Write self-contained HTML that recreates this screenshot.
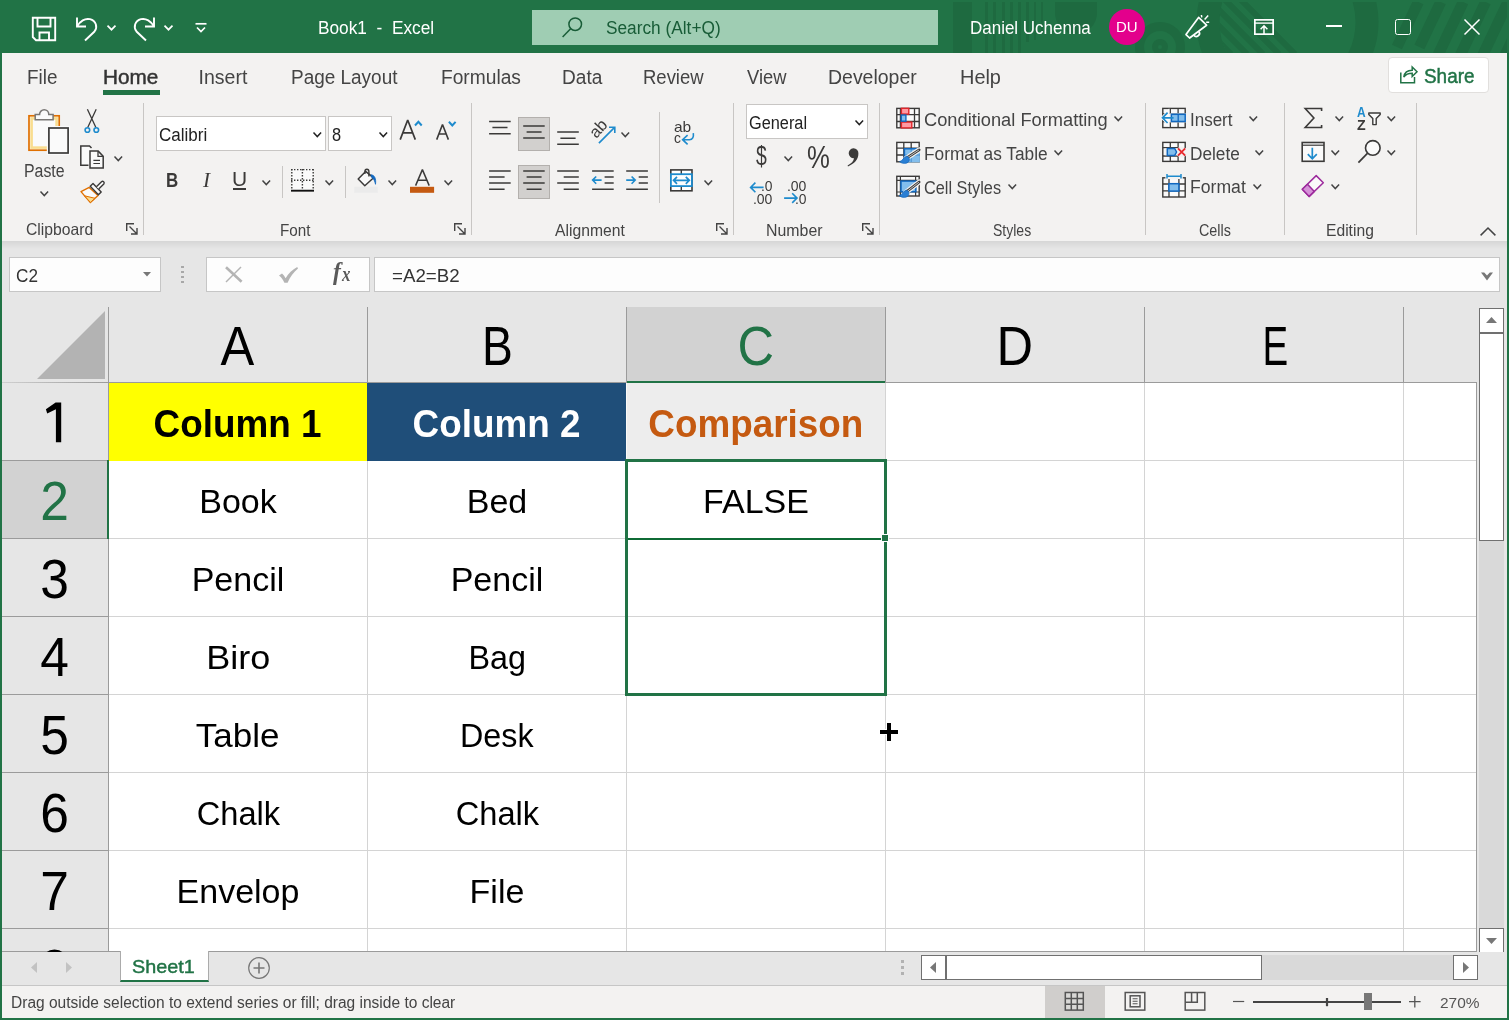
<!DOCTYPE html>
<html>
<head>
<meta charset="utf-8">
<title>Book1 - Excel</title>
<style>
*{box-sizing:border-box;margin:0;padding:0}
html,body{width:1509px;height:1020px;overflow:hidden;background:#f3f2f1;font-family:"Liberation Sans",sans-serif;color:#444}
#win{will-change:transform;position:absolute;left:0;top:0;width:1509px;height:1020px;overflow:hidden;background:#f3f2f1}
.abs{position:absolute}
.t{position:absolute;white-space:nowrap;line-height:1;transform-origin:0 0}
svg{position:absolute;overflow:visible}
/* title bar */
#title{position:absolute;left:0;top:0;width:1509px;height:53px;background:#217346;overflow:hidden}
#search{position:absolute;left:532px;top:10px;width:406px;height:35px;background:#9fcdb3}
/* tabs */
#tabs{position:absolute;left:2px;top:53px;width:1505px;height:47px;background:#f3f2f1}
/* ribbon */
#ribbon{position:absolute;left:2px;top:100px;width:1505px;height:141px;background:#f3f2f1}
.sep{position:absolute;width:1px;background:#c8c6c4;top:106px;height:131px}
.glabel{position:absolute;top:221px;font-size:16px;color:#444;white-space:nowrap;line-height:1}
/* formula bar */
#fbar{position:absolute;left:2px;top:241px;width:1505px;height:67px;background:#e6e6e6}
/* grid */
#grid{position:absolute;left:2px;top:308px;width:1474px;height:643px;background:#fff;overflow:hidden}

#gridwrap{position:absolute;left:0;top:0;width:1509px;height:952px;overflow:hidden}
.hl{position:absolute;height:1px;background:#d4d4d4;left:109px;width:1367px}
.vl{position:absolute;width:1px;background:#d4d4d4;top:383px;height:568px}
.ch{position:absolute;top:308px;height:74px;background:#e6e6e6}
.chl{position:absolute;top:307px;height:75px;width:1px;background:#9b9b9b}
.rh{position:absolute;left:2px;width:106px;height:77px;background:#e6e6e6}
.rhl{position:absolute;left:2px;width:106px;height:1px;background:#9b9b9b}
.cht{position:absolute;top:315.5px;font-size:55px;line-height:60px;color:#000;text-align:center;width:259px}
.rht{position:absolute;left:2px;width:106px;font-size:56px;line-height:60px;color:#000;text-align:center}
.cell{position:absolute;width:258px;height:77px;text-align:center;color:#000;font-size:34px;line-height:81px;white-space:nowrap}
.cell.hd{font-size:38px;line-height:82px}
.cell.hd span{transform:scaleX(.97)}
.cell span{display:inline-block}
.cht span,.rht span{display:inline-block;transform:scaleX(.92)}
.sbtn{background:#fff;border:1px solid #707070}
.tab{font-size:19.5px;line-height:23px;color:#444}
.gl{font-size:16.5px;line-height:20px;color:#444}
.rt{font-size:18px;line-height:21px;color:#444}
.box{background:#fff;border:1px solid #c8c6c4}
.ic{color:#3b3a39}
.fb{background:#fdfdfd;border:1px solid #c6c6c6}
</style>
</head>
<body>
<div id="win">
<div id="title">
  <!-- decorative pattern -->
  <svg style="left:0;top:0" width="1509" height="53" viewBox="0 0 1509 53">
    <defs><clipPath id="cpin"><circle cx="1287.5" cy="22" r="68"/></clipPath><clipPath id="cpbar"><rect x="0" y="2" width="1509" height="51"/></clipPath></defs>
    <g clip-path="url(#cpbar)">
    <g fill="#1e6a40" stroke="none">
      <rect x="953" y="2" width="19" height="51"/>
      <rect x="985" y="2" width="3" height="51"/><rect x="993" y="2" width="3" height="51"/><rect x="1002" y="2" width="3" height="51"/><rect x="1010" y="2" width="3" height="51"/><rect x="1018" y="2" width="3" height="51"/><rect x="1026" y="2" width="3" height="40"/><rect x="1034" y="2" width="2" height="38"/><rect x="1041" y="2" width="2" height="30"/>
      <path d="M1055 2H1097V13A21 21 0 0 1 1055 13Z"/>
    </g>
    <g fill="none" stroke="#1e6a40">
      <circle cx="1160" cy="47" r="20.5" stroke-width="9"/>
      <circle cx="1160" cy="47" r="5" stroke-width="6"/>
      <circle cx="1287.5" cy="22" r="79.5" stroke-width="23"/>
    </g>
    <g stroke="#1e6a40" stroke-width="6" fill="none" clip-path="url(#cpin)">
      <path d="M1177 0L1231 54M1193 0L1247 54M1209 0L1263 54M1225 0L1279 54M1241 0L1295 54"/>
    </g>
    <g stroke="#1e6a40" stroke-width="11" fill="none">
      <path d="M1418.4 2L1397 47M1440.8 2L1419.4 47M1463.2 2L1438 55M1485.6 2L1460.4 55M1508 2L1482.8 55M1530.4 2L1505.2 55"/>
    </g>
    </g>
  </svg>
  <div id="search"></div>
  <!-- save -->
  <svg style="left:32px;top:17px" width="24" height="24" viewBox="0 0 24 24" fill="none" stroke="#fff" stroke-width="1.9"><path d="M0.8 0.8H23.2V23.2H4L0.8 20Z"/><path d="M5.5 0.8V9.5H18.5V0.8"/><path d="M7.5 23V15.5H17V23"/></svg>
  <!-- undo -->
  <svg style="left:76px;top:17px" width="22" height="24" viewBox="0 0 22 24" fill="none" stroke="#fff" stroke-width="1.9"><path d="M1 0.5V9.5H10"/><path d="M1.3 9.2C4 4 9 1 14 2.2C20 3.8 22 10 18.5 14.5L9 23.5"/></svg>
  <svg style="left:107px;top:25px" width="9" height="6" viewBox="0 0 9 6" fill="none" stroke="#fff" stroke-width="1.7"><path d="M0.5 0.7L4.5 4.7L8.5 0.7"/></svg>
  <!-- redo -->
  <svg style="left:133px;top:17px" width="22" height="24" viewBox="0 0 22 24" fill="none" stroke="#fff" stroke-width="1.9"><path d="M21 0.5V9.5H12"/><path d="M20.7 9.2C18 4 13 1 8 2.2C2 3.8 0 10 3.5 14.5L13 23.5"/></svg>
  <svg style="left:164px;top:25px" width="9" height="6" viewBox="0 0 9 6" fill="none" stroke="#fff" stroke-width="1.7"><path d="M0.5 0.7L4.5 4.7L8.5 0.7"/></svg>
  <!-- customize -->
  <svg style="left:195px;top:23px" width="12" height="10" viewBox="0 0 12 10" fill="none" stroke="#fff" stroke-width="1.7"><path d="M0.5 0.8H11.5"/><path d="M2 4.5L6 8.5L10 4.5"/></svg>
  <div class="t" id="ttl" style="left:317.9px;top:17.6px;font-size:18px;color:#fff;line-height:21px;white-space:pre;transform:scaleX(0.959)">Book1  -  Excel</div>
  <!-- search icon -->
  <svg style="left:562px;top:17px" width="21" height="21" viewBox="0 0 21 21" fill="none" stroke="#185c37" stroke-width="1.5"><circle cx="13.2" cy="7.2" r="6.3"/><path d="M8.6 11.8L0.6 20"/></svg>
  <div class="t" id="srch" style="left:606.4px;top:17.6px;font-size:18px;color:#185c37;line-height:21px;transform:scaleX(0.959)">Search (Alt+Q)</div>
  <div class="t" id="usr" style="left:970.4px;top:17.6px;font-size:18px;color:#fff;line-height:21px;transform:scaleX(0.943)">Daniel Uchenna</div>
  <div class="abs" style="left:1109px;top:9px;width:36px;height:36px;border-radius:18px;background:#e3008c"></div>
  <div class="t" id="du" style="left:1116px;top:18px;font-size:15px;color:#fff;line-height:18px">DU</div>
  <!-- megaphone -->
  <svg style="left:1185px;top:14px" width="25" height="25" viewBox="0 0 25 25" fill="none" stroke="#fff" stroke-width="1.7"><path d="M13.6 3.4L1 20.6L4.6 24L21.6 11.2Z" stroke-linejoin="round"/><path d="M8.8 21.2A3 3 0 0 0 13.8 17.4"/><path d="M16.8 3.4L16.4 1M19.6 5.4L23.2 1.6M21.2 8.2H24.2" stroke-width="1.5"/></svg>
  <!-- ribbon display -->
  <svg style="left:1254px;top:19px" width="20" height="16" viewBox="0 0 20 16" fill="none" stroke="#fff" stroke-width="1.7"><rect x="0.85" y="0.85" width="18.3" height="14.3"/><path d="M0.8 4.1H19.2" stroke-width="1.4"/><path d="M10 15V7.4M6.6 10.2L10 6.8L13.4 10.2" stroke-width="1.5"/></svg>
  <!-- minimize -->
  <div class="abs" style="left:1326px;top:25px;width:16px;height:2px;background:#fff"></div>
  <!-- maximize -->
  <div class="abs" style="left:1395px;top:19px;width:16px;height:16px;border:1.5px solid #fff;border-radius:2.5px"></div>
  <!-- close -->
  <svg style="left:1464px;top:19px" width="16" height="16" viewBox="0 0 16 16" fill="none" stroke="#fff" stroke-width="1.5"><path d="M0.5 0.5L15.5 15.5M15.5 0.5L0.5 15.5"/></svg>
</div>
<div id="tabs"></div>
<div class="t tab" id="tab0" style="left:26.6px;top:66px;transform:scaleX(0.967)">File</div>
<div class="t tab" id="tab1" style="left:198.6px;top:66px;transform:scaleX(1.000)">Insert</div>
<div class="t tab" id="tab2" style="left:290.8px;top:66px;transform:scaleX(0.972)">Page Layout</div>
<div class="t tab" id="tab3" style="left:441.2px;top:66px;transform:scaleX(0.983)">Formulas</div>
<div class="t tab" id="tab4" style="left:562.2px;top:66px;transform:scaleX(0.978)">Data</div>
<div class="t tab" id="tab5" style="left:642.5px;top:66px;transform:scaleX(0.948)">Review</div>
<div class="t tab" id="tab6" style="left:746.6px;top:66px;transform:scaleX(0.940)">View</div>
<div class="t tab" id="tab7" style="left:828.2px;top:66px;transform:scaleX(0.998)">Developer</div>
<div class="t tab" id="tab8" style="left:960.0px;top:66px;transform:scaleX(1.021)">Help</div>
<div class="t tab" id="tabh" style="left:103.2px;top:66px;font-weight:normal;-webkit-text-stroke:0.45px currentColor;color:#333;transform:scaleX(1.062)">Home</div>
<div class="abs" style="left:103px;top:90px;width:57px;height:5px;background:#217346"></div>
<div class="abs" style="left:1388px;top:57px;width:101px;height:36px;background:#fff;border:1px solid #e1dfdd;border-radius:4px"></div>
<svg style="left:1400px;top:66px" width="18" height="18" viewBox="0 0 18 18" fill="none" stroke="#217346" stroke-width="1.5"><path d="M0.8 6.5V16.8H14.5V11"/><path d="M3.8 11C4.5 6.5 8 4.3 12.2 4.3V1L17 5.8L12.2 10.5V7.3C8.5 7.3 5.8 8.3 3.8 11Z"/></svg>
<div class="t" id="share" style="left:1424.0px;top:65px;font-size:19.5px;line-height:23px;font-weight:normal;-webkit-text-stroke:0.45px currentColor;color:#217346;transform:scaleX(0.970)">Share</div>
<div id="ribbon"></div>
<div id="fbar"></div>
<!-- FORMULA BAR -->
<div class="abs fb" style="left:9px;top:257px;width:152px;height:35px"></div>
<div class="abs fb" style="left:206px;top:257px;width:164px;height:35px"></div>
<div class="abs fb" style="left:374px;top:257px;width:1126px;height:35px"></div>
<div class="t" id="namebox" style="left:16.4px;top:265.8px;font-size:18px;line-height:21px;color:#333;transform:scaleX(0.952)">C2</div>
<div class="t" id="formula" style="left:391.8px;top:265.8px;font-size:18px;line-height:21px;color:#333;transform:scaleX(1.040)">=A2=B2</div>
<svg style="left:142.8px;top:272px" width="8" height="5" viewBox="0 0 8 5"><path d="M0 0H8L4 4.6Z" fill="#777"/></svg>
<div class="abs" style="left:181px;top:265.5px;width:3px;height:2.6px;background:#a8a8a8"></div>
<div class="abs" style="left:181px;top:270.5px;width:3px;height:2.6px;background:#a8a8a8"></div>
<div class="abs" style="left:181px;top:275.5px;width:3px;height:2.6px;background:#a8a8a8"></div>
<div class="abs" style="left:181px;top:280.5px;width:3px;height:2.6px;background:#a8a8a8"></div>
<svg style="left:224px;top:265px" width="20" height="19" viewBox="0 0 20 19" fill="none" stroke="#b4b4b4"><path d="M2 2.2L17.6 16.8" stroke-width="2.6"/><path d="M17 2L2 17" stroke-width="1.5"/></svg>
<svg style="left:278px;top:265px" width="21" height="19" viewBox="0 0 21 19" fill="#b4b4b4"><path d="M1 10.6L4 8.6C5.4 9.8 6.6 11.4 7.6 13.2C10.4 8.6 14.4 4.6 19.2 2L20 3.4C15.6 7 12.2 11.8 9.6 17.8H6.4C5.2 15 3.4 12.4 1 10.6Z"/></svg>
<div class="t" id="fxf" style="left:333.1px;top:258.1px;font-size:25px;line-height:28px;font-style:italic;font-weight:bold;font-family:'Liberation Serif',serif;color:#5a5a5a;transform:scaleX(0.942)">f</div><div class="t" id="fxx" style="left:342.3px;top:263.0px;font-size:20px;line-height:22px;font-style:italic;font-weight:bold;font-family:'Liberation Serif',serif;color:#5a5a5a;transform:scaleX(0.845)">x</div>
<svg style="left:1480.6px;top:271.6px" width="12" height="9" viewBox="0 0 12 9"><path d="M0 0.4H3.2L6 3.6L8.8 0.4H12L6 8.4Z" fill="#777"/></svg>
<!-- RIBBON -->
<div class="abs" style="left:143px;top:103px;width:1px;height:132px;background:#c8c6c4"></div>
<div class="abs" style="left:471px;top:103px;width:1px;height:132px;background:#c8c6c4"></div>
<div class="abs" style="left:733px;top:103px;width:1px;height:132px;background:#c8c6c4"></div>
<div class="abs" style="left:879px;top:103px;width:1px;height:132px;background:#c8c6c4"></div>
<div class="abs" style="left:1145px;top:103px;width:1px;height:132px;background:#c8c6c4"></div>
<div class="abs" style="left:1284px;top:103px;width:1px;height:132px;background:#c8c6c4"></div>
<div class="abs" style="left:1416px;top:103px;width:1px;height:132px;background:#c8c6c4"></div>
<div class="abs" style="left:282px;top:166px;width:1px;height:32px;background:#c8c6c4"></div>
<div class="abs" style="left:345px;top:166px;width:1px;height:32px;background:#c8c6c4"></div>
<div class="abs" style="left:659px;top:112px;width:1px;height:91px;background:#c8c6c4"></div>
<div class="t gl" id="gl0" style="left:26.4px;top:219.4px;transform:scaleX(0.951)">Clipboard</div>
<div class="t gl" id="gl1" style="left:280.4px;top:219.7px;transform:scaleX(0.924)">Font</div>
<div class="t gl" id="gl2" style="left:555.2px;top:219.9px;transform:scaleX(0.951)">Alignment</div>
<div class="t gl" id="gl3" style="left:765.6px;top:219.6px;transform:scaleX(0.963)">Number</div>
<div class="t gl" id="gl4" style="left:992.8px;top:219.9px;transform:scaleX(0.849)">Styles</div>
<div class="t gl" id="gl5" style="left:1198.6px;top:219.6px;transform:scaleX(0.870)">Cells</div>
<div class="t gl" id="gl6" style="left:1326.4px;top:219.9px;transform:scaleX(0.948)">Editing</div>
<svg style="left:126.2px;top:223.3px" width="12" height="12" viewBox="0 0 12 12" fill="none" stroke="#444" stroke-width="1.4"><path d="M0.7 8V0.7H8"/><path d="M3.5 3.5L11 11M11 5V11H5"/></svg>
<svg style="left:454.1px;top:223.3px" width="12" height="12" viewBox="0 0 12 12" fill="none" stroke="#444" stroke-width="1.4"><path d="M0.7 8V0.7H8"/><path d="M3.5 3.5L11 11M11 5V11H5"/></svg>
<svg style="left:716.0px;top:223.3px" width="12" height="12" viewBox="0 0 12 12" fill="none" stroke="#444" stroke-width="1.4"><path d="M0.7 8V0.7H8"/><path d="M3.5 3.5L11 11M11 5V11H5"/></svg>
<svg style="left:862.0px;top:223.3px" width="12" height="12" viewBox="0 0 12 12" fill="none" stroke="#444" stroke-width="1.4"><path d="M0.7 8V0.7H8"/><path d="M3.5 3.5L11 11M11 5V11H5"/></svg>
<div class="t rt" id="paste" style="left:24.1px;top:161.3px;transform:scaleX(0.882)">Paste</div>
<svg style="left:40.0px;top:190.6px" width="8.6" height="5.4" viewBox="0 0 8.6 5.4" fill="none" stroke="#444" stroke-width="1.5"><path d="M0.5 0.6L4.3 4.6000000000000005L8.1 0.6"/></svg>
<svg style="left:114.0px;top:155.6px" width="8.6" height="5.4" viewBox="0 0 8.6 5.4" fill="none" stroke="#444" stroke-width="1.5"><path d="M0.5 0.6L4.3 4.6000000000000005L8.1 0.6"/></svg>
<div class="abs box" style="left:156px;top:116px;width:170px;height:35px"></div>
<div class="abs box" style="left:328px;top:116px;width:64px;height:35px"></div>
<div class="t rt" id="calibri" style="left:159.3px;top:124.7px;color:#222;transform:scaleX(0.945)">Calibri</div>
<div class="t rt" id="fsize" style="left:331.5px;top:125.1px;color:#222;transform:scaleX(0.910)">8</div>
<svg style="left:313.0px;top:131.9px" width="8.6" height="5.4" viewBox="0 0 8.6 5.4" fill="none" stroke="#222" stroke-width="1.5"><path d="M0.5 0.6L4.3 4.6000000000000005L8.1 0.6"/></svg>
<svg style="left:379.0px;top:131.9px" width="8.6" height="5.4" viewBox="0 0 8.6 5.4" fill="none" stroke="#222" stroke-width="1.5"><path d="M0.5 0.6L4.3 4.6000000000000005L8.1 0.6"/></svg>
<div class="t" id="bB" style="left:166.0px;top:167.5px;font-size:21px;line-height:24px;font-weight:bold;color:#3b3a39;transform:scaleX(0.807)">B</div>
<div class="t" id="bI" style="left:202.6px;top:167.5px;font-size:21px;line-height:24px;font-style:italic;font-family:'Liberation Serif',serif;color:#3b3a39;transform:scaleX(1.011)">I</div>
<div class="t" id="bU" style="left:231.7px;top:167.2px;font-size:19.5px;line-height:24px;color:#3b3a39;transform:scaleX(1.075)">U</div>
<div class="abs" style="left:232.5px;top:188.4px;width:13.5px;height:1.6px;background:#3b3a39"></div>
<svg style="left:261.9px;top:179.7px" width="8.6" height="5.4" viewBox="0 0 8.6 5.4" fill="none" stroke="#444" stroke-width="1.5"><path d="M0.5 0.6L4.3 4.6000000000000005L8.1 0.6"/></svg>
<svg style="left:324.7px;top:179.7px" width="8.6" height="5.4" viewBox="0 0 8.6 5.4" fill="none" stroke="#444" stroke-width="1.5"><path d="M0.5 0.6L4.3 4.6000000000000005L8.1 0.6"/></svg>
<svg style="left:388.1px;top:179.7px" width="8.6" height="5.4" viewBox="0 0 8.6 5.4" fill="none" stroke="#444" stroke-width="1.5"><path d="M0.5 0.6L4.3 4.6000000000000005L8.1 0.6"/></svg>
<svg style="left:444.0px;top:179.7px" width="8.6" height="5.4" viewBox="0 0 8.6 5.4" fill="none" stroke="#444" stroke-width="1.5"><path d="M0.5 0.6L4.3 4.6000000000000005L8.1 0.6"/></svg>
<div class="abs box" style="left:746px;top:104px;width:122px;height:35px"></div>
<div class="t rt" id="general" style="left:749.4px;top:112.7px;color:#222;transform:scaleX(0.906)">General</div>
<svg style="left:854.8px;top:119.5px" width="8.6" height="5.4" viewBox="0 0 8.6 5.4" fill="none" stroke="#222" stroke-width="1.5"><path d="M0.5 0.6L4.3 4.6000000000000005L8.1 0.6"/></svg>
<svg style="left:783.8px;top:155.7px" width="8.6" height="5.4" viewBox="0 0 8.6 5.4" fill="none" stroke="#444" stroke-width="1.5"><path d="M0.5 0.6L4.3 4.6000000000000005L8.1 0.6"/></svg>
<div class="abs" style="left:518px;top:117px;width:32px;height:34px;background:#d2d0ce;border:1px solid #b3b0ad"></div>
<div class="abs" style="left:518px;top:165px;width:32px;height:34px;background:#d2d0ce;border:1px solid #b3b0ad"></div>
<svg style="left:621.0px;top:132.0px" width="8.6" height="5.4" viewBox="0 0 8.6 5.4" fill="none" stroke="#444" stroke-width="1.5"><path d="M0.5 0.6L4.3 4.6000000000000005L8.1 0.6"/></svg>
<svg style="left:704.1px;top:179.9px" width="8.6" height="5.4" viewBox="0 0 8.6 5.4" fill="none" stroke="#444" stroke-width="1.5"><path d="M0.5 0.6L4.3 4.6000000000000005L8.1 0.6"/></svg>
<div class="t rt" id="st0" style="left:924.0px;top:110.1px;transform:scaleX(1.014)">Conditional Formatting</div>
<svg style="left:1114.3px;top:116.1px" width="8.6" height="5.4" viewBox="0 0 8.6 5.4" fill="none" stroke="#444" stroke-width="1.5"><path d="M0.5 0.6L4.3 4.6000000000000005L8.1 0.6"/></svg>
<div class="t rt" id="st1" style="left:924.2px;top:143.7px;transform:scaleX(0.960)">Format as Table</div>
<svg style="left:1054.0px;top:149.8px" width="8.6" height="5.4" viewBox="0 0 8.6 5.4" fill="none" stroke="#444" stroke-width="1.5"><path d="M0.5 0.6L4.3 4.6000000000000005L8.1 0.6"/></svg>
<div class="t rt" id="st2" style="left:924.0px;top:177.5px;transform:scaleX(0.906)">Cell Styles</div>
<svg style="left:1008.4px;top:183.7px" width="8.6" height="5.4" viewBox="0 0 8.6 5.4" fill="none" stroke="#444" stroke-width="1.5"><path d="M0.5 0.6L4.3 4.6000000000000005L8.1 0.6"/></svg>
<div class="t rt" id="ce0" style="left:1190.1px;top:109.8px;transform:scaleX(0.944)">Insert</div>
<svg style="left:1248.6px;top:116.2px" width="8.6" height="5.4" viewBox="0 0 8.6 5.4" fill="none" stroke="#444" stroke-width="1.5"><path d="M0.5 0.6L4.3 4.6000000000000005L8.1 0.6"/></svg>
<div class="t rt" id="ce1" style="left:1190.0px;top:143.6px;transform:scaleX(0.957)">Delete</div>
<svg style="left:1254.8px;top:150.2px" width="8.6" height="5.4" viewBox="0 0 8.6 5.4" fill="none" stroke="#444" stroke-width="1.5"><path d="M0.5 0.6L4.3 4.6000000000000005L8.1 0.6"/></svg>
<div class="t rt" id="ce2" style="left:1190.0px;top:177.3px;transform:scaleX(0.979)">Format</div>
<svg style="left:1253.1px;top:183.8px" width="8.6" height="5.4" viewBox="0 0 8.6 5.4" fill="none" stroke="#444" stroke-width="1.5"><path d="M0.5 0.6L4.3 4.6000000000000005L8.1 0.6"/></svg>
<svg style="left:1334.7px;top:116.2px" width="8.6" height="5.4" viewBox="0 0 8.6 5.4" fill="none" stroke="#444" stroke-width="1.5"><path d="M0.5 0.6L4.3 4.6000000000000005L8.1 0.6"/></svg>
<svg style="left:1386.9px;top:116.2px" width="8.6" height="5.4" viewBox="0 0 8.6 5.4" fill="none" stroke="#444" stroke-width="1.5"><path d="M0.5 0.6L4.3 4.6000000000000005L8.1 0.6"/></svg>
<svg style="left:1330.9px;top:150.2px" width="8.6" height="5.4" viewBox="0 0 8.6 5.4" fill="none" stroke="#444" stroke-width="1.5"><path d="M0.5 0.6L4.3 4.6000000000000005L8.1 0.6"/></svg>
<svg style="left:1386.9px;top:150.2px" width="8.6" height="5.4" viewBox="0 0 8.6 5.4" fill="none" stroke="#444" stroke-width="1.5"><path d="M0.5 0.6L4.3 4.6000000000000005L8.1 0.6"/></svg>
<svg style="left:1330.9px;top:184.2px" width="8.6" height="5.4" viewBox="0 0 8.6 5.4" fill="none" stroke="#444" stroke-width="1.5"><path d="M0.5 0.6L4.3 4.6000000000000005L8.1 0.6"/></svg>
<svg style="left:1479.5px;top:227px" width="16" height="9" viewBox="0 0 16 9" fill="none" stroke="#444" stroke-width="1.5"><path d="M0.6 8.4L8 1L15.4 8.4"/></svg>
<div class="abs" style="left:2px;top:241px;width:1505px;height:8px;background:linear-gradient(#d6d6d6,#e6e6e6)"></div>
<svg id="ricons" style="left:0;top:100px" width="1509" height="141" viewBox="0 100 1509 141" fill="none">
<!-- paste -->
<rect x="29" y="115.8" width="30.2" height="34.4" fill="#fafafa" stroke="#e07000" stroke-width="1.7"/>
<rect x="31.6" y="118.4" width="25" height="29.2" stroke="#f9dd8f" stroke-width="2.6"/>
<path d="M35.2 119.8V114.4H39.6A4.6 4.6 0 0 1 48.8 114.4H53.1V119.8Z" fill="#fafafa" stroke="#797775" stroke-width="1.5"/>
<rect x="46.8" y="126" width="23.4" height="29" fill="#fafafa"/>
<rect x="48.9" y="128" width="19.2" height="25" fill="#fafafa" stroke="#3b3a39" stroke-width="1.7"/>
<!-- scissors -->
<path d="M87.4 109.2L95.9 127.6M96.2 109.2L87.7 127.6" stroke="#3b3a39" stroke-width="1.3"/>
<circle cx="87.4" cy="130" r="2.3" stroke="#1e8bcd" stroke-width="1.6"/><circle cx="96.3" cy="130" r="2.3" stroke="#1e8bcd" stroke-width="1.6"/>
<!-- copy -->
<path d="M88.5 165.2H80.8V146H89.5L91.5 148" stroke="#3b3a39" stroke-width="1.5" fill="#fafafa"/>
<path d="M90 151.1H98.2L103.2 156.2V167.9H90Z" fill="#fafafa" stroke="#3b3a39" stroke-width="1.5"/>
<path d="M98 151.3V156.4H103" stroke="#3b3a39" stroke-width="1.3"/>
<path d="M93.4 160.4H100M93.4 163.5H100" stroke="#3b3a39" stroke-width="1.2"/>
<!-- format painter -->
<path d="M89.2 187.4L81 191.6L90.4 202.6L98 195.6Z" fill="#fafafa" stroke="#e07000" stroke-width="1.4" stroke-linejoin="round"/>
<path d="M84.5 195.8L90.4 202.4L95 198.3Z" fill="#f9dd8f" stroke="#e07000" stroke-width="1"/>
<path d="M90.2 186.2L93 183.6L101.2 192L98.4 194.8Z" fill="#fafafa" stroke="#3b3a39" stroke-width="1.4" stroke-linejoin="round"/>
<path d="M96.4 186.8L101.5 181.8A1.6 1.6 0 0 1 103.8 184L98.7 189.1" fill="#fafafa" stroke="#3b3a39" stroke-width="1.4"/>
<!-- A^ Av -->
<path d="M400.2 139.6L407.7 120L415.3 139.6M403.1 132.8H412.4" stroke="#3b3a39" stroke-width="1.7" stroke-linejoin="bevel"/>
<path d="M415 125.5L418.4 121.8L421.7 125.5" stroke="#1e8bcd" stroke-width="2"/>
<path d="M436.7 139.6L442.5 124.5L448.4 139.6M439 134H446.2" stroke="#3b3a39" stroke-width="1.6" stroke-linejoin="bevel"/>
<path d="M448.9 121.8L452.3 125.5L455.6 121.8" stroke="#1e8bcd" stroke-width="2"/>
<!-- borders -->
<rect x="291.5" y="169" width="22" height="21" fill="#fafafa"/>
<path d="M291 169.6H314M291 180.3H314" stroke="#3b3a39" stroke-width="1.4" stroke-dasharray="1.4 1.6"/>
<path d="M291.8 169H291.8V190M302.4 169V190M313.2 169V190" stroke="#3b3a39" stroke-width="1.4" stroke-dasharray="1.4 1.6"/>
<path d="M291 190.7H314" stroke="#111" stroke-width="1.9"/>
<!-- bucket -->
<rect x="354.2" y="186.8" width="23.6" height="6" fill="#ebebeb"/>
<path d="M365.6 171.4L358.2 179L364.8 185.8L373.6 177.8Z" fill="#fafafa" stroke="#3b3a39" stroke-width="1.5" stroke-linejoin="round"/>
<path d="M364.9 174V171.6A2 2.4 0 0 1 368.9 171.6V176.6" stroke="#3b3a39" stroke-width="1.4"/>
<path d="M371 174.8C374.5 175 376.3 178.5 375.5 184.3C374.8 181 373.8 178.6 371.5 177.2Z" fill="#1168c0" stroke="#1168c0" stroke-width="0.8"/>
<!-- font color -->
<path d="M415.6 185.6L422.4 169.6L429.2 185.6M418 180.2H426.8" stroke="#3b3a39" stroke-width="1.5" stroke-linejoin="bevel"/>
<rect x="410" y="186.8" width="24.1" height="6" fill="#c55a11"/>
<path d="M489.1 121.5H510.7M492.4 127.6H507.5M489.1 133.7H510.7" stroke="#3b3a39" stroke-width="1.5"/>
<path d="M523.2 125.9H544.7M526.6 132H541.6M523.2 138.1H544.7" stroke="#3b3a39" stroke-width="1.5"/>
<path d="M557.2 132.1H578.8M560.4 138.2H575.6M557.2 144.3H578.8" stroke="#3b3a39" stroke-width="1.5"/>
<path d="M489.1 171.1H510.7M489.1 177.1H504.6M489.1 183.1H510.7M489.1 189.2H504.6" stroke="#3b3a39" stroke-width="1.5"/>
<path d="M523.2 171.1H544.7M526.6 177.1H541.6M523.2 183.1H544.7M526.6 189.2H541.6" stroke="#3b3a39" stroke-width="1.5"/>
<path d="M557.2 171.1H578.8M563.7 177.1H578.8M557.2 183.1H578.8M563.7 189.2H578.8" stroke="#3b3a39" stroke-width="1.5"/>
<path d="M592.1 171.1H613.7M604.6 177.1H613.7M604.6 183.1H613.7M592.1 189.2H613.7" stroke="#3b3a39" stroke-width="1.5"/>
<path d="M626.2 171.1H647.9M638.7 177.1H647.9M638.7 183.1H647.9M626.2 189.2H647.9" stroke="#3b3a39" stroke-width="1.5"/>
<path d="M592.6 180.1H601.6M596.2 176.5L592.6 180.1L596.2 183.7" stroke="#1e8bcd" stroke-width="1.6"/>
<path d="M626.2 180.1H635.2M631.6 176.5L635.2 180.1L631.6 183.7" stroke="#1e8bcd" stroke-width="1.6"/>
<path d="M598.9 143.1L614.6 127.4M609 127.2H614.8V133" stroke="#1e8bcd" stroke-width="1.6"/>
<path d="M682.6 139.7H689.5C692.5 139.7 693.9 137 693.3 133.2M687.6 135.2L682.6 139.7L687.6 144.3" stroke="#1e8bcd" stroke-width="1.6"/>
<rect x="670.8" y="169.9" width="21.2" height="20.9" fill="#fff" stroke="#3b3a39" stroke-width="1.6"/>
<path d="M681.3 170V191" stroke="#3b3a39" stroke-width="1.4"/>
<rect x="670.9" y="174.2" width="21" height="11.9" fill="#fdfdfd" stroke="#1e8bcd" stroke-width="1.8"/>
<path d="M673.6 180.3H689.2M677 176.8L673.5 180.3L677 183.8M685.8 176.8L689.3 180.3L685.8 183.8" stroke="#1e8bcd" stroke-width="1.7"/>
<path d="M853.3 148.3A4.9 4.9 0 0 1 858.4 153.6C858.4 159.6 854.4 163.9 848 166.4L847.6 165.4C851.6 163.4 853.6 161 854 158.2A4.9 4.9 0 0 1 853.3 148.3Z" fill="#3b3a39"/>
<path d="M750.6 187.4H763.6M755.4 182.6L750.6 187.4L755.4 192.2" stroke="#1e8bcd" stroke-width="1.6"/>
<path d="M784.1 198.1H797M792.2 193.3L797 198.1L792.2 202.9" stroke="#1e8bcd" stroke-width="1.6"/>
<!-- styles/cells/editing -->
<rect x="896.8" y="108.4" width="22.4" height="19.4" fill="#fafafa" stroke="#3b3a39" stroke-width="1.4"/>
<path d="M900.4 108.4V127.8M914.5 108.4V127.8M896.8 114.7H919.2M896.8 121.5H919.2" stroke="#3b3a39" stroke-width="1.3"/>
<rect x="901.4" y="108.3" width="7.4" height="5.8" fill="#ff9aa2" stroke="#e0262b" stroke-width="1.4"/>
<rect x="901.4" y="122.1" width="10.4" height="5.8" fill="#ff9aa2" stroke="#e0262b" stroke-width="1.4"/>
<rect x="901.3" y="115" width="4.6" height="6.2" fill="#83beec" stroke="#1168c0" stroke-width="1.4"/>
<rect x="896.8" y="142.4" width="22.4" height="19.4" fill="#fafafa" stroke="#3b3a39" stroke-width="1.4"/>
<path d="M903.8 142.4V161.8M911.2 142.4V161.8M896.8 148.2H919.2M896.8 155H919.2" stroke="#3b3a39" stroke-width="1.3"/>
<rect x="904.4" y="148.8" width="15.5" height="13.6" fill="#83beec"/>
<path d="M904.4 162.4V148.8H919.9" stroke="#1168c0" stroke-width="1.5"/>
<path d="M911.2 149V162M904 155H920" stroke="#1168c0" stroke-width="1" opacity=".55"/>
<path d="M906.1 158.4L919.2 149.8" stroke="#f3f2f1" stroke-width="5" stroke-linecap="round"/><path d="M906.1 158.4L919.2 149.8" stroke="#3b3a39" stroke-width="2.6" stroke-linecap="round"/><path d="M906.6 158.2L918.6 150.2" stroke="#d8d6d4" stroke-width="0.9" stroke-linecap="round"/><path d="M899.6 161.6C902.6 161.3 903.2 157.0 906.8 156.2C909.8 157.2 910.0 160.2 908.2 162.2C905.2 164.2 901.6 163.4 899.6 161.6Z" fill="#2a7fd4" stroke="#1168c0" stroke-width="0.8"/>
<rect x="896.8" y="176.3" width="22.4" height="19.7" fill="#fafafa" stroke="#3b3a39" stroke-width="1.4"/>
<path d="M900.4 176.3V196M915.6 176.3V196M896.8 180.3H919.2M896.8 192H919.2" stroke="#3b3a39" stroke-width="1.2"/>
<rect x="901" y="181.1" width="14.8" height="10.6" fill="#83beec" stroke="#1168c0" stroke-width="1.5"/>
<path d="M905.7 192.4L919.2 182" stroke="#f3f2f1" stroke-width="5" stroke-linecap="round"/><path d="M905.7 192.4L919.2 182" stroke="#3b3a39" stroke-width="2.6" stroke-linecap="round"/><path d="M906.2 192.2L918.6 182.4" stroke="#d8d6d4" stroke-width="0.9" stroke-linecap="round"/><path d="M899.2 195.6C902.2 195.3 902.8 191.0 906.4 190.2C909.4 191.2 909.6 194.2 907.8 196.2C904.8 198.2 901.2 197.4 899.2 195.6Z" fill="#2a7fd4" stroke="#1168c0" stroke-width="0.8"/>
<rect x="1162.8" y="108.4" width="22.4" height="19.2" fill="#fafafa" stroke="#3b3a39" stroke-width="1.4"/>
<path d="M1170.3 108.4V127.6M1178.1 108.4V127.6M1162.8 113.9H1185.2M1162.8 121.7H1185.2" stroke="#3b3a39" stroke-width="1.3"/>
<rect x="1169" y="113.4" width="17" height="9" fill="#f3f2f1"/>
<path d="M1162 117.8L1168 111.4V124.2Z" fill="#fafafa" stroke="#fafafa" stroke-width="2.5"/>
<rect x="1171.4" y="114.3" width="13.8" height="7.2" fill="#83beec" stroke="#1168c0" stroke-width="1.5"/>
<path d="M1178.2 114.3V121.5" stroke="#1168c0" stroke-width="1.3"/>
<path d="M1162.6 117.8H1173.6M1167.6 112.6L1162.5 117.8L1167.6 123" stroke="#1e8bcd" stroke-width="1.7"/>
<rect x="1162.8" y="142.4" width="22.4" height="19" fill="#fafafa" stroke="#3b3a39" stroke-width="1.4"/>
<path d="M1170.3 142.4V161.4M1178.1 142.4V161.4M1162.8 147.7H1185.2M1162.8 156H1185.2" stroke="#3b3a39" stroke-width="1.3"/>
<rect x="1164.6" y="148.5" width="22" height="6.8" fill="#f3f2f1"/>
<circle cx="1181.6" cy="152" r="5.6" fill="#f3f2f1"/>
<path d="M1167.3 148.4H1174.6L1176.6 152L1174.6 155.6H1167.3Z" fill="#83beec" stroke="#1168c0" stroke-width="1.5" stroke-linejoin="round"/>
<path d="M1178 148.3L1185.2 155.7M1185.2 148.3L1178 155.7" stroke="#e8282c" stroke-width="1.8"/>
<rect x="1162.8" y="177.8" width="22.4" height="19.2" fill="#fafafa" stroke="#3b3a39" stroke-width="1.4"/>
<rect x="1165.4" y="173.5" width="17.4" height="6" fill="#f3f2f1"/>
<path d="M1169 179V197M1178.9 179V197M1162.8 184H1185.2M1162.8 190.8H1185.2" stroke="#3b3a39" stroke-width="1.3"/>
<rect x="1168.9" y="183.7" width="10" height="7.4" fill="#83beec" stroke="#1168c0" stroke-width="1.5"/>
<path d="M1167 176.2H1181M1167 174V178.5M1181 174V178.5" stroke="#1e8bcd" stroke-width="1.5"/>
<path d="M1321.6 111V108.5H1305.2L1313.9 118L1305.2 127.5H1321.6V125" stroke="#3b3a39" stroke-width="1.6" stroke-linejoin="miter"/>
<path d="M1368.8 113H1380.2V114.4L1376.2 118.6V124.6H1372.8V118.6L1368.8 114.4Z" fill="#fafafa" stroke="#3b3a39" stroke-width="1.4" stroke-linejoin="round"/>
<rect x="1302.2" y="142.5" width="21.8" height="18.8" fill="#fafafa" stroke="#3b3a39" stroke-width="1.6"/>
<path d="M1302.2 145.2H1324" stroke="#3b3a39" stroke-width="1.2"/>
<path d="M1312.3 147.8V158.6M1307.8 154.2L1312.3 158.8L1316.8 154.2" stroke="#1e8bcd" stroke-width="1.7"/>
<circle cx="1372.8" cy="147.9" r="7.3" fill="#fafafa" stroke="#3b3a39" stroke-width="1.6"/>
<path d="M1367.4 153.4L1358.4 162.6" stroke="#3b3a39" stroke-width="1.7"/>
<path d="M1316.2 175.6L1323.3 182.7L1309.2 196.4L1302.3 189.2Z" fill="#fafafa" stroke="#9c2a9c" stroke-width="1.5" stroke-linejoin="round"/>
<path d="M1307.5 184.2L1314.3 191.4L1309.2 196.4L1302.3 189.2Z" fill="#d591d8" stroke="#9c2a9c" stroke-width="1.5" stroke-linejoin="round"/>
</svg>
<div class="t" id="orab" style="left:584.8px;top:129.4px;font-size:16.5px;line-height:18px;color:#3b3a39;transform-origin:0 0;transform:rotate(-48deg)">ab</div>
<div class="t ic" id="wrab" style="left:673.9px;top:119.0px;font-size:14.5px;line-height:16px;transform:scaleX(1.069)">ab</div>
<div class="t ic" id="wrc" style="left:673.9px;top:130.2px;font-size:14.5px;line-height:16px;transform:scaleX(0.957)">c</div>
<div class="t ic" id="dollar" style="left:755.8px;top:139.4px;font-size:28.5px;line-height:32px;transform:scaleX(0.681)">$</div>
<div class="t ic" id="pct" style="left:806.8px;top:140.1px;font-size:32px;line-height:34px;transform:scaleX(0.803)">%</div>
<div class="t ic" id="d1a" style="left:761.0px;top:178.1px;font-size:14px;line-height:16px;transform:scaleX(0.991)">.0</div>
<div class="t ic" id="d1b" style="left:752.9px;top:190.5px;font-size:14px;line-height:16px;transform:scaleX(1.000)">.00</div>
<div class="t ic" id="d2a" style="left:786.9px;top:178.1px;font-size:14px;line-height:16px;transform:scaleX(1.000)">.00</div>
<div class="t ic" id="d2b" style="left:795.0px;top:190.5px;font-size:14px;line-height:16px;transform:scaleX(0.991)">.0</div>
<div class="t" id="sfA" style="left:1357.3px;top:102.5px;font-size:15px;line-height:17px;font-weight:bold;color:#1e8bcd;transform:scaleX(0.800)">A</div>
<div class="t" id="sfZ" style="left:1357.3px;top:116.7px;font-size:14.5px;line-height:17px;font-weight:bold;color:#3b3a39;transform:scaleX(0.978)">Z</div>
<!-- /RIBBON -->
<div id="gridwrap">
<div class="abs" style="left:2px;top:300px;width:1505px;height:83px;background:#e6e6e6"></div>
<div class="abs" style="left:109px;top:383px;width:1367px;height:568px;background:#fff"></div>
<div class="abs" style="left:2px;top:383px;width:106px;height:568px;background:#e6e6e6"></div>
<div class="abs" style="left:627px;top:307px;width:258px;height:74px;background:#d2d2d2"></div>
<div class="abs" style="left:627px;top:381px;width:259px;height:2px;background:#217346"></div>
<div class="abs" style="left:2px;top:461px;width:105px;height:77px;background:#d2d2d2"></div>
<div class="abs" style="left:2px;top:382px;width:106px;height:1px;background:linear-gradient(90deg,#d0d0d0,#9b9b9b)"></div>
<div class="abs" style="left:108px;top:382px;width:519px;height:1px;background:#9b9b9b"></div>
<div class="abs" style="left:885px;top:382px;width:592px;height:1px;background:#9b9b9b"></div>
<div class="chl" style="left:108px"></div>
<div class="chl" style="left:367px"></div>
<div class="chl" style="left:626px"></div>
<div class="chl" style="left:885px"></div>
<div class="chl" style="left:1144px"></div>
<div class="chl" style="left:1403px"></div>
<div class="abs" style="left:108px;top:383px;width:1px;height:568px;background:#9b9b9b"></div>
<div class="rhl" style="top:460px"></div>
<div class="rhl" style="top:538px"></div>
<div class="rhl" style="top:616px"></div>
<div class="rhl" style="top:694px"></div>
<div class="rhl" style="top:772px"></div>
<div class="rhl" style="top:850px"></div>
<div class="rhl" style="top:928px"></div>
<div class="hl" style="top:460px"></div>
<div class="hl" style="top:538px"></div>
<div class="hl" style="top:616px"></div>
<div class="hl" style="top:694px"></div>
<div class="hl" style="top:772px"></div>
<div class="hl" style="top:850px"></div>
<div class="hl" style="top:928px"></div>
<div class="vl" style="left:367px"></div>
<div class="vl" style="left:626px"></div>
<div class="vl" style="left:885px"></div>
<div class="vl" style="left:1144px"></div>
<div class="vl" style="left:1403px"></div>
<div class="abs" style="left:1476px;top:382px;width:1px;height:570px;background:#9b9b9b"></div>
<div class="abs" style="left:2px;top:951px;width:1475px;height:1px;background:#9b9b9b"></div>
<div class="abs" style="left:107px;top:460px;width:2px;height:79px;background:#217346"></div>
<svg style="left:37px;top:311px" width="68" height="68"><path d="M68 0V68H0Z" fill="#b3b3b3"/></svg>
<div class="abs" style="left:109px;top:383px;width:258px;height:78px;background:#ffff00"></div>
<div class="abs" style="left:367px;top:383px;width:259px;height:78px;background:#1f4e79"></div>
<div class="abs" style="left:626px;top:383px;width:1px;height:77px;background:#fbfaf8"></div>
<div class="abs" style="left:627px;top:383px;width:258px;height:76px;background:#ededed"></div>
<div class="cht" style="left:108px;color:#000"><span>A</span></div>
<div class="cht" style="left:368px;color:#000"><span style="transform:scaleX(.84)">B</span></div>
<div class="cht" style="left:626px;color:#217346"><span>C</span></div>
<div class="cht" style="left:885px;color:#000"><span>D</span></div>
<div class="cht" style="left:1146px;color:#000"><span style="transform:scaleX(.70)">E</span></div>
<svg style="left:45px;top:402px" width="18" height="41"><path d="M10.6 0.6H16.2V40.3H10.9V7.2L2.2 11.6L0.9 7.2Z" fill="#000"/></svg>
<div class="rht" style="top:471px;color:#217346"><span>2</span></div>
<div class="rht" style="top:549px;color:#000"><span>3</span></div>
<div class="rht" style="top:627px;color:#000"><span>4</span></div>
<div class="rht" style="top:705px;color:#000"><span>5</span></div>
<div class="rht" style="top:783px;color:#000"><span>6</span></div>
<div class="rht" style="top:861px;color:#000"><span>7</span></div>
<div class="rht" style="top:939px;color:#000"><span>8</span></div>
<div class="cell hd" style="left:109px;top:383px;font-weight:bold"><span>Column 1</span></div>
<div class="cell hd" style="left:368px;top:383px;font-weight:bold;color:#fff"><span>Column 2</span></div>
<div class="cell" style="left:109px;top:461px"><span>Book</span></div>
<div class="cell" style="left:368px;top:461px"><span>Bed</span></div>
<div class="cell" style="left:109px;top:539px"><span>Pencil</span></div>
<div class="cell" style="left:368px;top:539px"><span>Pencil</span></div>
<div class="cell" style="left:109px;top:617px"><span style="transform:scaleX(1.06)">Biro</span></div>
<div class="cell" style="left:368px;top:617px"><span style="transform:scaleX(0.95)">Bag</span></div>
<div class="cell" style="left:109px;top:695px"><span style="transform:scaleX(1.03)">Table</span></div>
<div class="cell" style="left:368px;top:695px"><span style="transform:scaleX(0.95)">Desk</span></div>
<div class="cell" style="left:109px;top:773px"><span style="transform:scaleX(0.96)">Chalk</span></div>
<div class="cell" style="left:368px;top:773px"><span style="transform:scaleX(0.96)">Chalk</span></div>
<div class="cell" style="left:109px;top:851px"><span>Envelop</span></div>
<div class="cell" style="left:368px;top:851px"><span>File</span></div>
<div class="cell hd" style="left:627px;top:383px;font-weight:bold;color:#c55a11"><span>Comparison</span></div>
<div class="cell" style="left:627px;top:461px"><span>FALSE</span></div>
<div class="abs" style="left:625px;top:459px;width:262px;height:237px;border:3px solid #217346"></div>
<div class="abs" style="left:628px;top:538px;width:253px;height:2px;background:#0f6b35"></div>
<div class="abs" style="left:881px;top:534px;width:8px;height:8px;background:#fff"></div>
<div class="abs" style="left:882px;top:535px;width:6px;height:6px;background:#217346"></div>
<div class="abs" style="left:879px;top:729px;width:20px;height:6px;background:#fff"></div><div class="abs" style="left:886px;top:722px;width:6px;height:20px;background:#fff"></div><div class="abs" style="left:880px;top:730px;width:18px;height:4px;background:#000"></div>
<div class="abs" style="left:887px;top:723px;width:4px;height:18px;background:#000"></div>
</div>

<!-- vertical scrollbar -->
<div class="abs" style="left:1477px;top:300px;width:30px;height:660px;background:#e6e6e6"></div>
<div class="abs" style="left:1479px;top:333px;width:25px;height:596px;background:#d9d9d9"></div>
<div class="abs sbtn" style="left:1479px;top:308px;width:25px;height:25px"></div>
<div class="abs sbtn" style="left:1479px;top:333px;width:25px;height:208px"></div>
<div class="abs sbtn" style="left:1479px;top:928px;width:25px;height:25px"></div>
<svg style="left:1486px;top:317px" width="11" height="6"><path d="M0 6L5.5 0L11 6Z" fill="#777"/></svg>
<svg style="left:1486px;top:938px" width="11" height="6"><path d="M0 0L5.5 6L11 0Z" fill="#777"/></svg>
<!-- sheet tab bar -->
<div class="abs" style="left:2px;top:952px;width:1505px;height:33px;background:#e6e6e6"></div>
<div class="abs" style="left:933px;top:955px;width:545px;height:25px;background:#d9d9d9"></div>
<div class="abs sbtn" style="left:921px;top:955px;width:25px;height:25px"></div>
<div class="abs sbtn" style="left:946px;top:955px;width:316px;height:25px"></div>
<div class="abs sbtn" style="left:1453px;top:955px;width:25px;height:25px"></div>
<svg style="left:930px;top:962px" width="6" height="11"><path d="M6 0L0 5.5L6 11Z" fill="#777"/></svg>
<svg style="left:1463px;top:962px" width="6" height="11"><path d="M0 0L6 5.5L0 11Z" fill="#777"/></svg>
<!-- splitter dots -->
<div class="abs" style="left:901px;top:960px;width:3px;height:3px;background:#b2b2b2;box-shadow:0 6px #b2b2b2,0 12px #b2b2b2"></div>
<!-- sheet tab -->
<div class="abs" style="left:120px;top:951px;width:89px;height:31px;background:#fff;border-left:1px solid #ababab;border-right:1px solid #ababab;border-bottom:2px solid #217346"></div>
<div class="t" id="sheet1" style="left:132.2px;top:955.7px;font-size:19px;font-weight:normal;-webkit-text-stroke:0.45px currentColor;color:#217346;line-height:22px;transform:scaleX(1.041)">Sheet1</div>
<svg style="left:31px;top:962px" width="6" height="11"><path d="M6 0L0 5.5L6 11Z" fill="#c2c2c2"/></svg>
<svg style="left:66px;top:962px" width="6" height="11"><path d="M0 0L6 5.5L0 11Z" fill="#c2c2c2"/></svg>
<svg style="left:247px;top:956px" width="24" height="24"><circle cx="12" cy="12" r="10.3" fill="none" stroke="#777" stroke-width="1.2"/><path d="M6.5 12H17.5M12 6.5V17.5" stroke="#777" stroke-width="1.6" fill="none"/></svg>
<!-- status bar -->
<div class="abs" style="left:2px;top:985px;width:1505px;height:1px;background:#c6c6c6"></div>
<div class="abs" style="left:2px;top:986px;width:1505px;height:32px;background:#f3f2f1"></div>
<div class="t" id="status" style="left:11.1px;top:994.1px;font-size:16px;color:#444;line-height:18px;transform:scaleX(0.970)">Drag outside selection to extend series or fill; drag inside to clear</div>
<div class="abs" style="left:1045px;top:986px;width:60px;height:32px;background:#d0cecc"></div>
<svg style="left:0;top:986px" width="1509" height="32" viewBox="0 986 1509 32" fill="none" stroke="#555" stroke-width="1.5"><rect x="1065.3" y="992.5" width="18" height="17.6" fill="#d9d8d6"/><path d="M1071.3 992.5V1010M1077.3 992.5V1010M1065.3 998.4H1083.3M1065.3 1004.2H1083.3"/><rect x="1125.2" y="992.5" width="19.6" height="17.6"/><rect x="1130.2" y="995.8" width="9.8" height="11" /><path d="M1132.6 998.8H1137.6M1132.6 1001.3H1137.6M1132.6 1003.8H1137.6" stroke-width="1.1"/><rect x="1185.2" y="992.5" width="19.6" height="17.6"/><path d="M1191.6 992.5V1002.2M1197.3 992.5V1002.2H1185.2"/><path d="M1233 1001.5H1244.2" stroke-width="1.2"/><path d="M1253 1002H1401" stroke="#444" stroke-width="2.2"/><path d="M1327 998V1006.2" stroke="#444" stroke-width="2.2"/><rect x="1364" y="993" width="8" height="17" fill="#777" stroke="none"/><path d="M1409 1001.7H1420.6M1414.8 996V1007.4" stroke-width="1.3"/></svg>
<div class="t" id="zoompct" style="left:1439.6px;top:993.5px;font-size:15px;color:#555;line-height:18px;transform:scaleX(1.029)">270%</div>
<!-- window border -->
<div class="abs" style="left:0;top:0;width:2px;height:1020px;background:#217346"></div>
<div class="abs" style="left:1507px;top:0;width:2px;height:1020px;background:#217346"></div>
<div class="abs" style="left:0;top:1018px;width:1509px;height:2px;background:#217346"></div>
</div>
</body>
</html>
